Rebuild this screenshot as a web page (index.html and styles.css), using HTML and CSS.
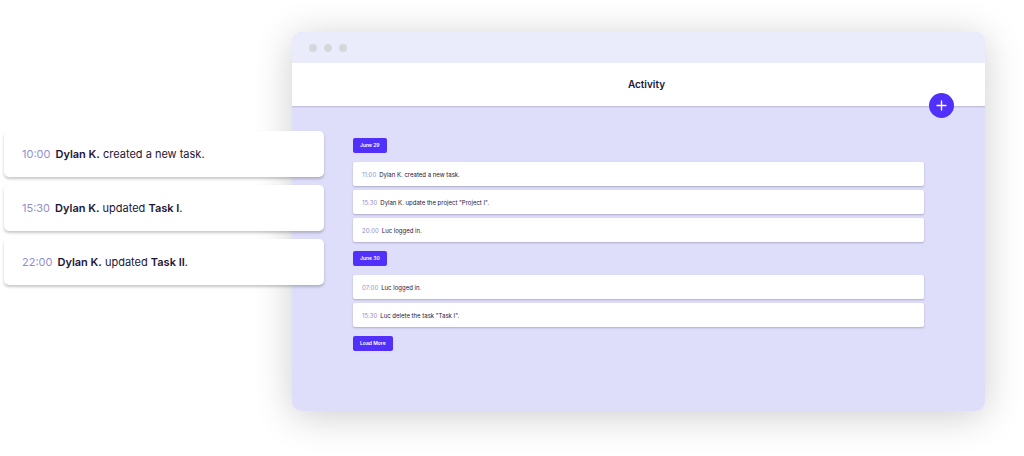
FILE: index.html
```
<!DOCTYPE html>
<html lang="en">
<head>
    <meta charset="utf-8">
    <title>Activity</title>
    <link rel="stylesheet" href="styles.css">
</head>
<body>
    <div class="scene">
        <main class="window">
            <div class="titlebar">
                <span></span>
                <span></span>
                <span></span>
            </div>
            <header>
                <h1>Activity</h1>
                <button class="add" aria-label="Add">
                    <svg viewBox="0 0 25 25" width="25" height="25"><path d="M12.5 8v9M8 12.5h9" stroke="#fff" stroke-width="1.4" stroke-linecap="round"/></svg>
                </button>
            </header>
            <div class="feed">
                <h2 class="tag">June 29</h2>
                <ul class="log">
                    <li><time>11:00</time>Dylan K. created a new task.</li>
                    <li><time>15:30</time>Dylan K. update the project "Project I".</li>
                    <li><time>20:00</time>Luc logged in.</li>
                </ul>
                <h2 class="tag">June 30</h2>
                <ul class="log">
                    <li><time>07:00</time>Luc logged in.</li>
                    <li><time>15:30</time>Luc delete the task "Task I".</li>
                </ul>
                <button class="tag">Load More</button>
            </div>
        </main>

        <!-- enlarged entries, lying over the window's left edge -->
        <ul class="log highlights">
            <li><time>10:00</time><span><b>Dylan K.</b> created a new task.</span></li>
            <li><time>15:30</time><span><b>Dylan K.</b> updated <b>Task I</b>.</span></li>
            <li><time>22:00</time><span><b>Dylan K.</b> updated <b>Task II</b>.</span></li>
        </ul>
    </div>
</body>
</html>
```
FILE: styles.css
```
* {
    box-sizing: border-box;
}
body {
    margin: 0;
    background: #fff;
    color: #1c1637;
    font-family: Inter, "Liberation Sans", sans-serif;
}
h1, h2, ul {
    margin: 0;
    padding: 0;
}
button {
    border: 0;
    font-family: inherit;
    cursor: pointer;
}
.scene {
    position: relative;
    padding: 32px 39px 45px 292px;
}
.window {
    border-radius: 10px;
    background: #dedefa;
    box-shadow: 0 5px 38px rgba(0, 0, 0, 0.2);
}
.titlebar {
    display: flex;
    align-items: center;
    gap: 7px;
    height: 31px;
    padding-left: 17px;
    border-radius: 10px 10px 0 0;
    background: #ebecfb;
}
.titlebar span {
    width: 8px;
    height: 8px;
    border-radius: 50%;
    background: #d5d8db;
}
header {
    position: relative;
    display: flex;
    align-items: center;
    justify-content: center;
    height: 43px;
    padding-left: 16px;
    background: #fff;
    box-shadow: 0 1px 0 #c4c2de, 0 2px 0 #d3d1ee;
}
h1 {
    font-size: 10px;
    font-weight: 600;
    line-height: 13px;
}
.add {
    position: absolute;
    right: 31px;
    bottom: -12px;
    width: 25px;
    height: 25px;
    padding: 0;
    border-radius: 50%;
    background: #5030fa;
}
.add svg {
    display: block;
}
.feed {
    display: flex;
    flex-direction: column;
    align-items: flex-start;
    gap: 9px;
    padding: 32px 61px 60px;
}
.tag {
    padding: 0 7px;
    border-radius: 2px;
    background: #5030fa;
    color: #fff;
    font-size: 5px;
    font-weight: 600;
    line-height: 15px;
}
.log {
    display: flex;
    flex-direction: column;
    gap: 4px;
    width: 100%;
    list-style: none;
}
.log li {
    display: flex;
    align-items: center;
    gap: 3px;
    height: 24px;
    padding: 0 9px;
    border-radius: 2px;
    background: #fff;
    box-shadow: 0 1px 2px rgba(28, 22, 55, 0.25);
    font-size: 6px;
}
time {
    color: #8f90cb;
}
.highlights {
    position: absolute;
    top: 131px;
    left: 4px;
    gap: 8px;
    width: 320px;
}
.highlights li {
    gap: 5px;
    height: 46px;
    padding: 0 18px;
    border-radius: 5px;
    box-shadow: 0 2px 3px rgba(0, 0, 0, 0.22);
    font-size: 11px;
}
.highlights b {
    font-weight: 600;
}
```
